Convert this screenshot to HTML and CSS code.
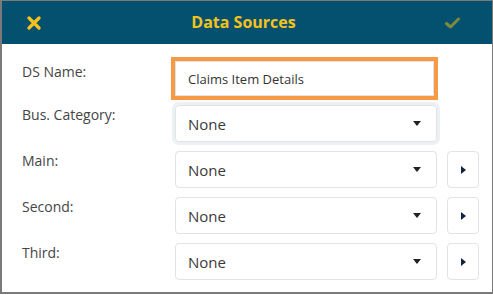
FILE: index.html
```html
<!DOCTYPE html>
<html lang="en">
<head>
<meta charset="UTF-8">
<title>Data Sources</title>
<link rel="stylesheet" href="styles.css">
</head>
<body>
<div class="window">
  <div class="title-bar">
    <span class="title-icon close">
      <svg width="14" height="14" viewBox="0 0 14 14"><path d="M2 2 L12 12 M12 2 L2 12" stroke="#f8c21c" stroke-width="3.2" stroke-linecap="round"/></svg>
    </span>
    <div class="title-text">Data Sources</div>
    <span class="title-icon ok">
      <svg width="15" height="12" viewBox="0 0 15 12"><path d="M1.5 6.5 L5.5 10 L13.5 2" fill="none" stroke="#7d8a3c" stroke-width="3" stroke-linecap="round" stroke-linejoin="round"/></svg>
    </span>
  </div>
  <div class="form">
    <label class="label first">DS Name:</label>
    <input class="text-field" type="text" value="Claims Item Details">
    <span></span>

    <label class="label">Bus. Category:</label>
    <div class="select focused"><span>None</span><i class="caret"></i></div>
    <span></span>

    <label class="label">Main:</label>
    <div class="select"><span>None</span><i class="caret"></i></div>
    <button class="go-button"><i class="arrow"></i></button>

    <label class="label">Second:</label>
    <div class="select"><span>None</span><i class="caret"></i></div>
    <button class="go-button"><i class="arrow"></i></button>

    <label class="label">Third:</label>
    <div class="select"><span>None</span><i class="caret"></i></div>
    <button class="go-button"><i class="arrow"></i></button>
  </div>
</div>
</body>
</html>
```

FILE: styles.css
```css
body {
  margin: 0;
  font-family: "Open Sans", sans-serif;
  background-color: #fff;
}

.window {
  width: 493px;
  height: 294px;
  box-sizing: border-box;
  border: 1px solid #7a7a7a;
  border-left-width: 2px;
  border-bottom-width: 2px;
  background-color: #fff;
}

.title-bar {
  height: 43px;
  background-color: #04516f;
  display: grid;
  grid-template-columns: 1fr auto 1fr;
  align-items: center;
  padding: 0 32px 0 25px;
}

.title-icon {
  display: flex;
}

.title-icon.ok {
  justify-self: end;
}

.title-text {
  color: #f8c21c;
  font-weight: 700;
  font-size: 16px;
  margin-top: -1px;
}

.form {
  display: grid;
  grid-template-columns: 143px 262px 32px;
  grid-auto-rows: 37px;
  column-gap: 10px;
  row-gap: 9px;
  padding: 15px 0 0 20px;
}

.label {
  font-size: 14px;
  line-height: 20px;
  color: #454545;
}

.label.first {
  padding-top: 3px;
}

.text-field {
  width: 259px;
  height: 35px;
  margin-top: 2px;
  box-sizing: border-box;
  border: 1px solid #dfe2e6;
  box-shadow: 0 0 0 4px #f79a46;
  outline: none;
  padding: 0 12px;
  font-family: "Open Sans", sans-serif;
  font-size: 13px;
  color: #333;
}

.select {
  display: flex;
  align-items: center;
  justify-content: space-between;
  box-sizing: border-box;
  border: 1px solid #e0e3e8;
  border-radius: 4px;
  padding: 0 15px 0 12px;
  font-size: 15px;
  color: #3a3a3a;
}

.select.focused {
  box-shadow: 0 0 0 3px #eef0f3;
}

.caret {
  width: 0;
  height: 0;
  border-left: 4px solid transparent;
  border-right: 4px solid transparent;
  border-top: 5px solid #222;
}

.go-button {
  background-color: #fff;
  border: 1px solid #e0e3e8;
  border-radius: 4px;
  padding: 0;
  display: flex;
  align-items: center;
  justify-content: center;
  cursor: pointer;
}

.arrow {
  width: 0;
  height: 0;
  border-top: 4px solid transparent;
  border-bottom: 4px solid transparent;
  border-left: 5px solid #14243f;
  margin-left: 1px;
}
```
